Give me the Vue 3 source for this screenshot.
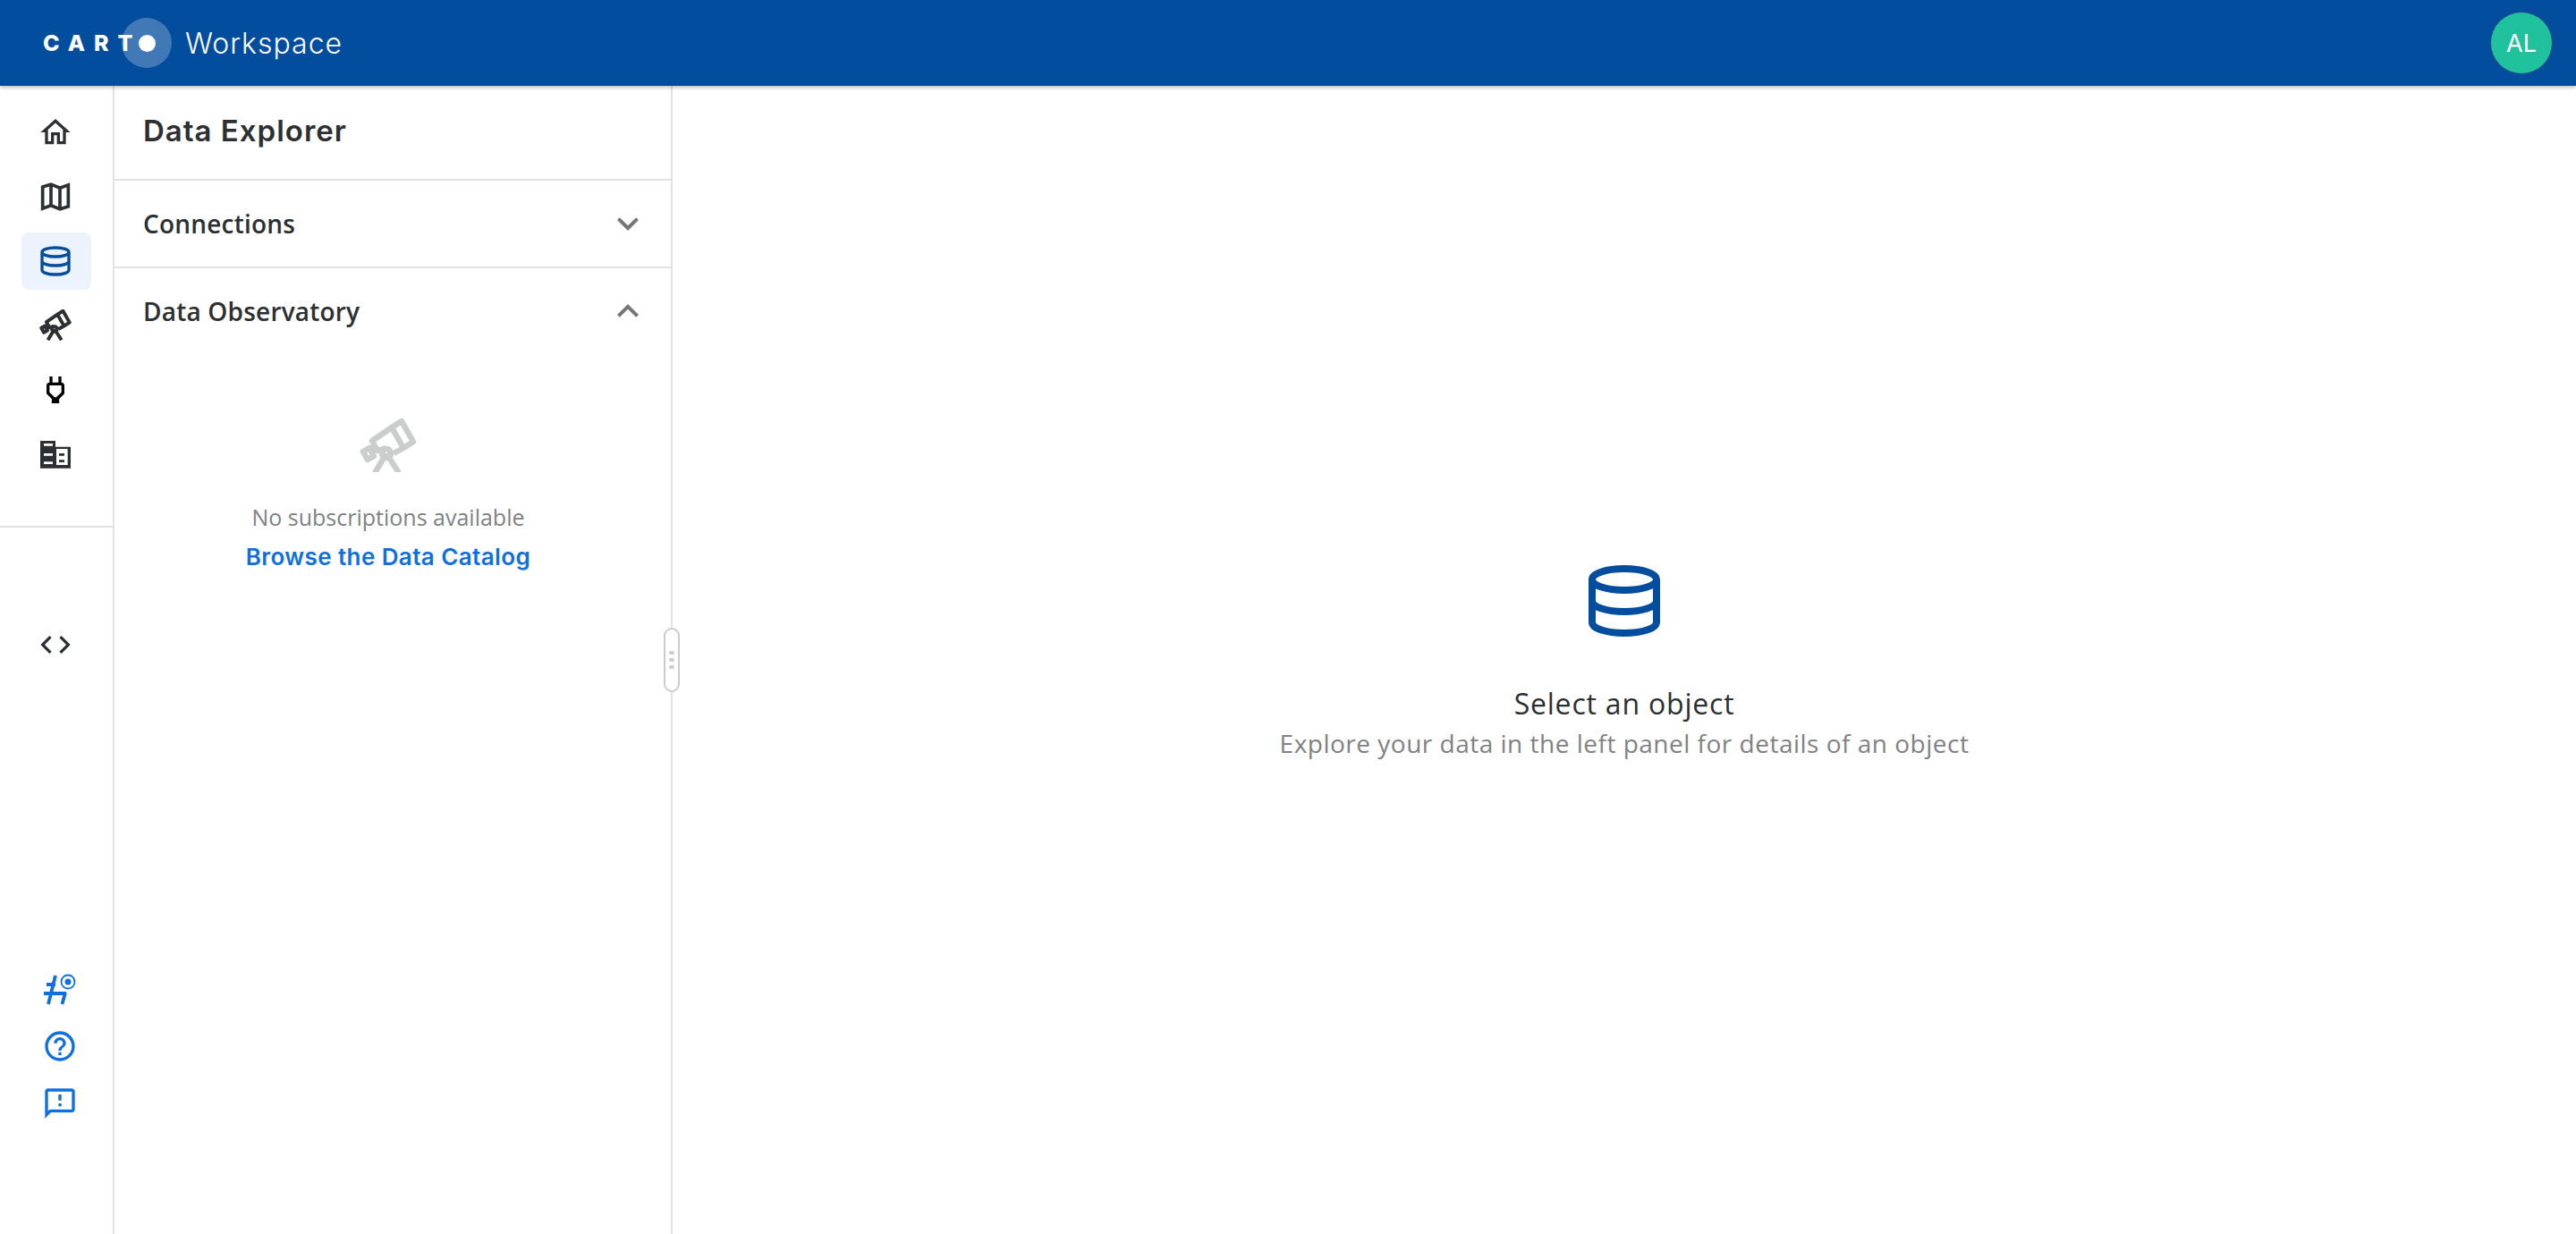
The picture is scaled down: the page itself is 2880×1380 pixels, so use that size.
<script setup>
import { ref } from "vue";

const connectionsOpen = ref(false);
const observatoryOpen = ref(true);
</script>

<template>
  <div class="page">
    <header class="topbar">
      <div class="brand">
        <span class="logo-text">CART</span>
        <span class="logo-dot"><span></span></span>
        <span class="product">Workspace</span>
      </div>
      <div class="avatar">AL</div>
    </header>

    <div class="body">
      <nav class="rail">
        <div class="rail-top">
          <a class="rail-item">
            <svg viewBox="0 0 24 24"><path d="M12 5.690l5 4.500V18h-2v-6H9v6H7v-7.810l5-4.500M12 3L2 12h3v8h6v-6h2v6h6v-8h3L12 3z" /></svg>
          </a>
          <a class="rail-item">
            <svg viewBox="0 0 24 24"><path class="line thick" d="M3.400 5.400L9 3.700l6 2.400 5.600-2v14.500L15 20.300l-6-2.400-5.600 2zM9 3.700v14.200M15 6.100v14.200" /></svg>
          </a>
          <a class="rail-item active">
            <svg viewBox="0 0 24 24"><path class="line" d="M3 6C3 4.300 7 3 12 3s9 1.300 9 3-4 3-9 3-9-1.300-9-3zM3 6v12c0 1.700 4 3 9 3s9-1.300 9-3V6M3 12c0 1.700 4 3 9 3s9-1.300 9-3" /></svg>
          </a>
          <a class="rail-item">
            <svg viewBox="0 0 64 64" class="scope">
              <path d="M36 10L47 3l13 23-11 7zM36 10L14 25l6 11 9-3M49 33l-11 6M4 37l7-4 5 9-7 4zM30 39L17 61M30 39l14 22" />
              <circle cx="30" cy="39" r="5" />
            </svg>
          </a>
          <a class="rail-item plug">
            <svg viewBox="0 0 24 24"><path fill-rule="evenodd" d="M16 7V3h-2v4h-4V3H8v4H7.990C6.890 7 6 7.890 6 8.980v5.520L9.500 18v3h5v-3l3.500-3.500V9c0-1.100-.9-2-2-2zm0 6.670L12.500 17h-1L8 13.650V9h8z" /></svg>
          </a>
          <a class="rail-item">
            <svg viewBox="0 0 24 24">
              <path fill-rule="evenodd" d="M1.800 3H12v4h10.200v14.400H1.800zM4.200 4.800v1.700h6V4.800zM4.200 11.400V13h6v-1.600zM4.200 17v1.600h6V17zM12.600 8.400v10.800h7.600V8.400z" />
              <path d="M14.400 11.400H18V13h-3.600zM14.400 15.800H18v1.600h-3.600z" />
            </svg>
          </a>
        </div>
        <div class="rail-mid">
          <a class="rail-item">
            <svg viewBox="0 0 24 24"><path d="M9.400 16.600L4.800 12l4.600-4.600L8 6l-6 6 6 6 1.400-1.400zm5.200 0l4.600-4.600-4.600-4.600L16 6l6 6-6 6-1.400-1.400z" /></svg>
          </a>
        </div>
        <div class="rail-bottom">
          <a class="rail-item">
            <svg viewBox="0 0 40 40" class="hash">
              <path d="M15 5L7 37M26 24l-3.500 13M5 15h10M2 25h25" />
              <circle class="ring" cx="29" cy="12" r="7.500" />
              <circle class="dot" cx="29" cy="12" r="3.500" />
            </svg>
          </a>
          <a class="rail-item">
            <svg viewBox="0 0 24 24"><path d="M11 18h2v-2h-2v2zm1-16C6.480 2 2 6.480 2 12s4.480 10 10 10 10-4.480 10-10S17.520 2 12 2zm0 18c-4.410 0-8-3.590-8-8s3.590-8 8-8 8 3.590 8 8-3.590 8-8 8zm0-14c-2.210 0-4 1.790-4 4h2c0-1.100.9-2 2-2s2 .9 2 2c0 2-3 1.750-3 5h2c0-2.250 3-2.500 3-5 0-2.210-1.790-4-4-4z" /></svg>
          </a>
          <a class="rail-item">
            <svg viewBox="0 0 24 24"><path d="M20 2H4c-1.100 0-2 .9-2 2v18l4-4h14c1.100 0 2-.9 2-2V4c0-1.100-.9-2-2-2zm0 14H5.170L4 17.170V4h16v12zM11 12h2v2h-2zm0-6h2v4h-2z" /></svg>
          </a>
        </div>
      </nav>

      <aside class="panel">
        <h1 class="panel-title">Data Explorer</h1>
        <section class="group">
          <button class="group-head" @click="connectionsOpen = !connectionsOpen">
            <span>Connections</span>
            <svg viewBox="0 0 24 24"><path d="M16.590 8.590L12 13.170 7.410 8.590 6 10l6 6 6-6z" /></svg>
          </button>
        </section>
        <section class="group last">
          <button class="group-head" @click="observatoryOpen = !observatoryOpen">
            <span>Data Observatory</span>
            <svg viewBox="0 0 24 24"><path d="M12 8l-6 6 1.410 1.410L12 10.830l4.590 4.580L18 14z" /></svg>
          </button>
          <div v-if="observatoryOpen" class="empty">
            <svg viewBox="0 0 64 60" class="scope empty-icon">
              <path d="M36 10L47 3l13 23-11 7zM36 10L14 25l6 11 9-3M49 33l-11 6M4 37l7-4 5 9-7 4zM30 39L17 61M30 39l14 22" />
              <circle cx="30" cy="39" r="5" />
            </svg>
            <p class="empty-text">No subscriptions available</p>
            <a class="empty-link">Browse the Data Catalog</a>
          </div>
        </section>
        <div class="handle"><i></i><i></i><i></i></div>
      </aside>

      <main class="main">
        <svg viewBox="0 0 24 24" class="main-icon"><path class="line" d="M3 6C3 4.300 7 3 12 3s9 1.300 9 3-4 3-9 3-9-1.300-9-3zM3 6v12c0 1.700 4 3 9 3s9-1.300 9-3V6M3 12c0 1.700 4 3 9 3s9-1.300 9-3" /></svg>
        <h2 class="main-title">Select an object</h2>
        <p class="main-text">Explore your data in the left panel for details of an object</p>
      </main>
    </div>
  </div>
</template>

<style>
html,
body {
  margin: 0;
  background: #fff;
  overflow: hidden;
}
</style>

<style scoped>
.page {
  width: 2880px;
  height: 1380px;
  display: flex;
  flex-direction: column;
  font-family: "Open Sans", sans-serif;
  color: #2c3032;
}

/* TOP BAR */

.topbar {
  height: 96px;
  flex: none;
  display: flex;
  align-items: center;
  justify-content: space-between;
  padding: 0 26px 0 48px;
  background: #024d9e;
  box-shadow: 0 2px 4px rgba(0, 0, 0, 0.25);
  position: relative;
  z-index: 2;
}

.brand {
  display: flex;
  align-items: center;
}

.logo-text {
  font-family: Inter, sans-serif;
  font-weight: 800;
  font-size: 25px;
  letter-spacing: 10px;
  color: #fff;
  width: 88px;
  white-space: nowrap;
}

.logo-dot {
  width: 56px;
  height: 56px;
  border-radius: 50%;
  background: rgba(255, 255, 255, 0.25);
  display: flex;
  align-items: center;
  justify-content: center;
}

.logo-dot span {
  width: 19px;
  height: 19px;
  border-radius: 50%;
  background: #fff;
}

.product {
  font-family: Inter, sans-serif;
  font-weight: 300;
  font-size: 32px;
  color: #fff;
  margin-left: 15px;
  letter-spacing: 1px;
}

.avatar {
  width: 68px;
  height: 68px;
  border-radius: 50%;
  background: #1fc29c;
  border: 1px solid #2c4a86;
  display: flex;
  align-items: center;
  justify-content: center;
  font-family: Inter, sans-serif;
  font-size: 27px;
  color: #fff;
}

.body {
  flex: 1;
  display: flex;
  min-height: 0;
}

/* LEFT RAIL */

.rail {
  width: 126px;
  flex: none;
  border-right: 2px solid #e2e2e2;
  display: flex;
  flex-direction: column;
}

.rail-top {
  padding: 20px 0 48px;
  display: flex;
  flex-direction: column;
  gap: 8px;
  border-bottom: 2px solid #e2e2e2;
}

.rail-mid {
  padding-top: 99px;
}

.rail-bottom {
  margin-top: auto;
  padding: 0 0 114px 10px;
  display: flex;
  flex-direction: column;
}

.rail-item {
  height: 64px;
  margin: 0 24px;
  padding-right: 2px;
  border-radius: 8px;
  display: flex;
  align-items: center;
  justify-content: center;
  color: #2c3032;
}

.rail-bottom .rail-item {
  color: #0f6fdf;
}

.rail-item svg {
  width: 40px;
  height: 40px;
  fill: currentColor;
}

.rail-item.active {
  background: #edf3fc;
  color: #024d9e;
}

.rail-item.plug {
  color: #000;
}

.line {
  fill: none;
  stroke: currentColor;
  stroke-width: 2;
}

.line.thick {
  stroke-width: 2.200;
}

.scope {
  fill: none !important;
  stroke: currentColor;
  stroke-width: 6.500;
  stroke-linejoin: round;
}

.rail-item svg.scope {
  width: 36px;
  height: 36px;
  stroke-width: 7;
}

.hash {
  overflow: visible;
  fill: none !important;
  stroke: currentColor;
  stroke-width: 3.800;
}

.ring {
  stroke-width: 1.800;
}

.dot {
  fill: currentColor;
  stroke: none;
}

/* DATA EXPLORER PANEL */

.panel {
  width: 622px;
  flex: none;
  border-right: 2px solid #e2e2e2;
  display: flex;
  flex-direction: column;
  position: relative;
}

.panel-title {
  margin: 0;
  height: 100px;
  padding: 0 0 4px 32px;
  display: flex;
  align-items: center;
  font-family: Inter, sans-serif;
  font-weight: 600;
  font-size: 33px;
  letter-spacing: 1px;
  color: #2c3032;
  border-bottom: 2px solid #e2e2e2;
}

.group {
  border-bottom: 2px solid #e2e2e2;
}

.group.last {
  border-bottom: none;
}

.group-head {
  width: 100%;
  height: 96px;
  padding: 0 24px 0 32px;
  display: flex;
  align-items: center;
  justify-content: space-between;
  background: none;
  border: none;
  font-family: "Open Sans", sans-serif;
  font-weight: 600;
  font-size: 28px;
  letter-spacing: 0.2px;
  color: #2c3032;
}

.group-head svg {
  width: 48px;
  height: 48px;
  fill: #747678;
}

.empty {
  padding: 72px 10px 0 0;
  display: flex;
  flex-direction: column;
  align-items: center;
}

.empty-icon {
  width: 64px;
  height: 60px;
  color: #cbcccc;
}

.empty-text {
  margin: 32px 0 0;
  font-size: 25px;
  line-height: 36px;
  color: #7f8283;
}

.empty-link {
  margin-top: 9px;
  font-family: Inter, sans-serif;
  font-weight: 600;
  font-size: 26px;
  line-height: 36px;
  letter-spacing: 0.4px;
  color: #0f6fdf;
}

.handle {
  position: absolute;
  top: 606px;
  right: -10px;
  width: 18px;
  height: 72px;
  box-sizing: border-box;
  background: #fff;
  border: 2px solid #cbcccc;
  border-radius: 9px;
  display: flex;
  flex-direction: column;
  align-items: center;
  justify-content: center;
  gap: 4px;
}

.handle i {
  width: 6px;
  height: 4px;
  border-radius: 2px;
  background: #cbcccc;
}

/* MAIN */

.main {
  flex: 1;
  display: flex;
  flex-direction: column;
  align-items: center;
  padding-top: 528px;
}

.main-icon {
  width: 96px;
  height: 96px;
  color: #024d9e;
}

.main-title {
  margin: 45px 0 0;
  font-weight: 400;
  font-size: 32px;
  line-height: 44px;
  letter-spacing: 0.8px;
  color: #2c3032;
}

.main-text {
  margin: 0;
  font-size: 28px;
  line-height: 44px;
  letter-spacing: 0.5px;
  color: #7f8283;
}
</style>
